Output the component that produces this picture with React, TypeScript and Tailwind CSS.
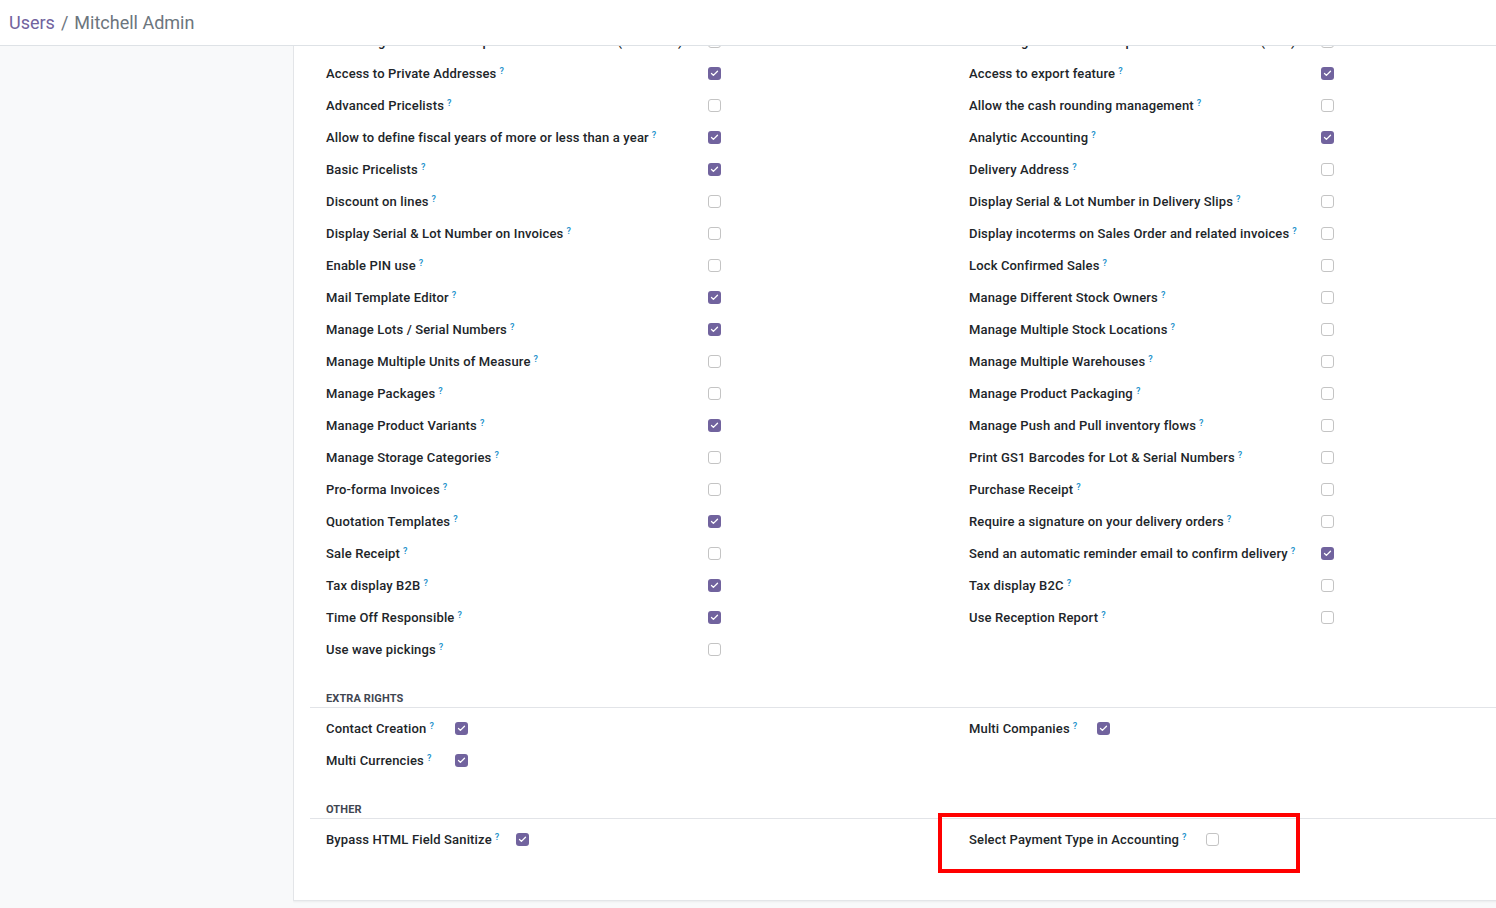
import { Check } from 'lucide-react'

type Right = { label: string; on: boolean }

const leftRights: Right[] = [
  { label: 'A warning can be set on a product or a customer (Purchase)', on: false },
  { label: 'Access to Private Addresses', on: true },
  { label: 'Advanced Pricelists', on: false },
  { label: 'Allow to define fiscal years of more or less than a year', on: true },
  { label: 'Basic Pricelists', on: true },
  { label: 'Discount on lines', on: false },
  { label: 'Display Serial & Lot Number on Invoices', on: false },
  { label: 'Enable PIN use', on: false },
  { label: 'Mail Template Editor', on: true },
  { label: 'Manage Lots / Serial Numbers', on: true },
  { label: 'Manage Multiple Units of Measure', on: false },
  { label: 'Manage Packages', on: false },
  { label: 'Manage Product Variants', on: true },
  { label: 'Manage Storage Categories', on: false },
  { label: 'Pro-forma Invoices', on: false },
  { label: 'Quotation Templates', on: true },
  { label: 'Sale Receipt', on: false },
  { label: 'Tax display B2B', on: true },
  { label: 'Time Off Responsible', on: true },
  { label: 'Use wave pickings', on: false },
]

const rightRights: Right[] = [
  { label: 'A warning can be set on a product or a customer (Sale)', on: false },
  { label: 'Access to export feature', on: true },
  { label: 'Allow the cash rounding management', on: false },
  { label: 'Analytic Accounting', on: true },
  { label: 'Delivery Address', on: false },
  { label: 'Display Serial & Lot Number in Delivery Slips', on: false },
  { label: 'Display incoterms on Sales Order and related invoices', on: false },
  { label: 'Lock Confirmed Sales', on: false },
  { label: 'Manage Different Stock Owners', on: false },
  { label: 'Manage Multiple Stock Locations', on: false },
  { label: 'Manage Multiple Warehouses', on: false },
  { label: 'Manage Product Packaging', on: false },
  { label: 'Manage Push and Pull inventory flows', on: false },
  { label: 'Print GS1 Barcodes for Lot & Serial Numbers', on: false },
  { label: 'Purchase Receipt', on: false },
  { label: 'Require a signature on your delivery orders', on: false },
  { label: 'Send an automatic reminder email to confirm delivery', on: true },
  { label: 'Tax display B2C', on: false },
  { label: 'Use Reception Report', on: false },
]

function Checkbox({ on }: { on: boolean }) {
  return on ? (
    <span className="w-[13px] h-[13px] rounded-[3px] bg-[#71639e] flex items-center justify-center">
      <Check size={9} strokeWidth={3.5} className="text-white" />
    </span>
  ) : (
    <span className="w-[13px] h-[13px] rounded-[3px] border border-[#c4c4c4] bg-white" />
  )
}

function Row({ right, labelWidth }: { right: Right; labelWidth: string }) {
  return (
    <div className="flex items-center h-[32px] pl-4">
      <div className={`${labelWidth} shrink-0 pt-[2px] text-[13px] font-medium tracking-[0.15px] text-[#212529] whitespace-nowrap`}>
        {right.label}
        <sup className="text-[#1f93cc] text-[9px] ml-[3px] font-semibold">?</sup>
      </div>
      <Checkbox on={right.on} />
    </div>
  )
}

function SectionTitle({ title }: { title: string }) {
  return (
    <div className="h-[20px] border-b border-[#e2e4e8] pl-4 pt-[4px] flex items-center text-[11px] font-bold uppercase text-[#3f4651] tracking-[0.01em]">
      {title}
    </div>
  )
}

export default function App() {
  return (
    <div className="w-[1496px] h-[908px] overflow-hidden bg-[#f8f9fa] flex flex-col" style={{ fontFamily: 'Roboto, "Noto Sans", sans-serif' }}>
      {/* Breadcrumb bar */}
      <div className="h-[46px] shrink-0 bg-white border-b border-[#dee2e6] flex items-center pl-[9px] z-10">
        <span className="text-[18px] text-[#71639e]">Users</span>
        <span className="text-[18px] text-[#6c757d] mx-[6px]">/</span>
        <span className="text-[18px] text-[#6c757d]">Mitchell Admin</span>
      </div>

      <div className="flex-1 flex overflow-hidden">
        <div className="w-[293px] shrink-0" />
        <div className="flex-1 overflow-hidden">
          <div className="w-[1320px] h-[876px] bg-white border-l border-b border-[#e3e5e8] shadow-[0_1px_2px_rgba(0,0,0,0.06)] pl-4 mt-[-21px]">
            <div className="grid grid-cols-[643px_643px]">
              <div>
                {leftRights.map(r => <Row key={r.label} right={r} labelWidth="w-[382px]" />)}
              </div>
              <div>
                {rightRights.map(r => <Row key={r.label} right={r} labelWidth="w-[352px]" />)}
              </div>
            </div>

            <div className="mt-[23px]">
              <SectionTitle title="Extra Rights" />
              <div className="grid grid-cols-[643px_643px] mt-[4px]">
                <div>
                  <Row right={{ label: 'Contact Creation', on: true }} labelWidth="w-[129px]" />
                  <Row right={{ label: 'Multi Currencies', on: true }} labelWidth="w-[129px]" />
                </div>
                <div>
                  <Row right={{ label: 'Multi Companies', on: true }} labelWidth="w-[128px]" />
                </div>
              </div>
            </div>

            <div className="mt-[23px]">
              <SectionTitle title="Other" />
              <div className="grid grid-cols-[643px_643px] mt-[4px]">
                <div>
                  <Row right={{ label: 'Bypass HTML Field Sanitize', on: true }} labelWidth="w-[190px]" />
                </div>
                <div className="relative">
                  <Row right={{ label: 'Select Payment Type in Accounting', on: false }} labelWidth="w-[237px]" />
                  {/* highlight annotation */}
                  <div className="absolute left-[-15px] top-[-10px] w-[362px] h-[60px] border-[4px] border-[#ff0000]" />
                </div>
              </div>
            </div>
          </div>
        </div>
      </div>
    </div>
  )
}
